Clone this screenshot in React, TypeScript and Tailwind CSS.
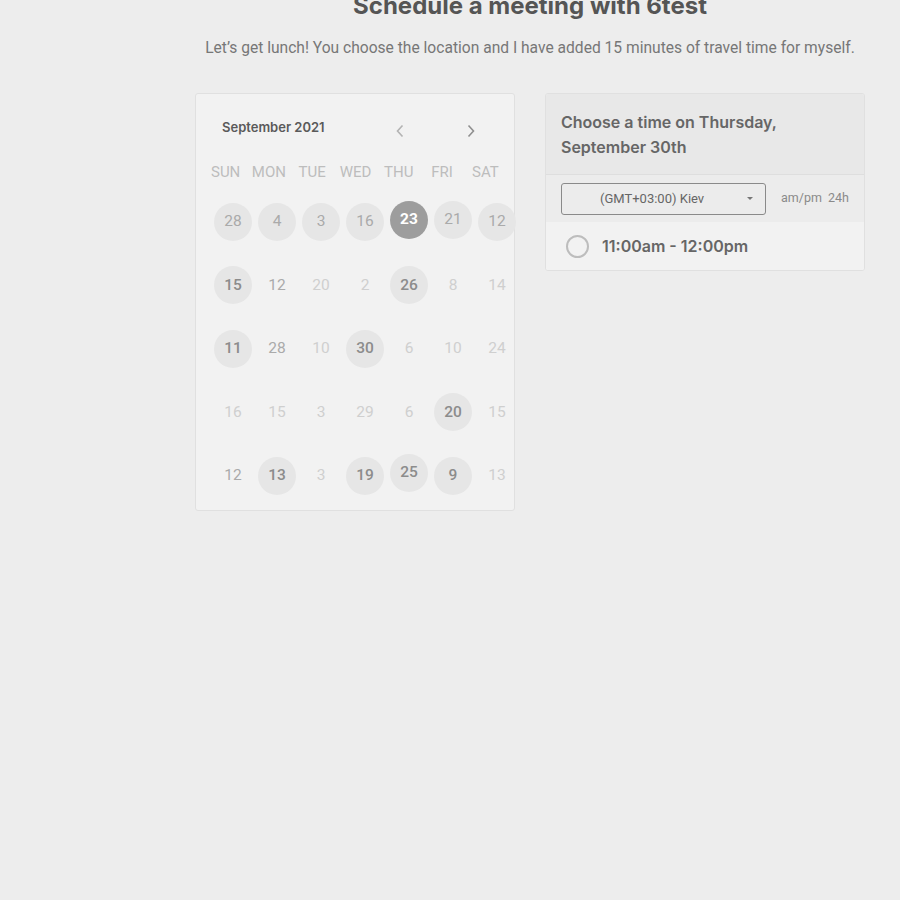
const days = ["SUN", "MON", "TUE", "WED", "THU", "FRI", "SAT"];

type Cell = { n: number; kind: "open" | "strong" | "plain" | "faint" | "selected"; dy?: number };

const weeks: Cell[][] = [
  [
    { n: 28, kind: "open" },
    { n: 4, kind: "open" },
    { n: 3, kind: "open" },
    { n: 16, kind: "open" },
    { n: 23, kind: "selected", dy: -2 },
    { n: 21, kind: "open", dy: -2 },
    { n: 12, kind: "open" },
  ],
  [
    { n: 15, kind: "strong" },
    { n: 12, kind: "plain" },
    { n: 20, kind: "faint" },
    { n: 2, kind: "faint" },
    { n: 26, kind: "strong" },
    { n: 8, kind: "faint" },
    { n: 14, kind: "faint" },
  ],
  [
    { n: 11, kind: "strong" },
    { n: 28, kind: "plain" },
    { n: 10, kind: "faint" },
    { n: 30, kind: "strong" },
    { n: 6, kind: "faint" },
    { n: 10, kind: "faint" },
    { n: 24, kind: "faint" },
  ],
  [
    { n: 16, kind: "faint" },
    { n: 15, kind: "faint" },
    { n: 3, kind: "faint" },
    { n: 29, kind: "faint" },
    { n: 6, kind: "faint" },
    { n: 20, kind: "strong" },
    { n: 15, kind: "faint" },
  ],
  [
    { n: 12, kind: "plain" },
    { n: 13, kind: "strong" },
    { n: 3, kind: "faint" },
    { n: 19, kind: "strong" },
    { n: 25, kind: "strong", dy: -3 },
    { n: 9, kind: "strong" },
    { n: 13, kind: "faint" },
  ],
];

const cellClass = {
  open: "bg-[#e6e6e6] text-[#aaaaaa]",
  strong: "bg-[#e6e6e6] text-[#8c8c8c] font-medium",
  plain: "text-[#aaaaaa]",
  faint: "text-[#cfcfcf]",
  selected: "bg-[#9d9d9d] text-white font-bold",
};

const Chevron = ({ dir }: { dir: "left" | "right" }) => (
  <svg width="10" height="16" viewBox="0 0 10 16" fill="none">
    <path
      d={dir === "left" ? "M7.5 2.5 L2.5 8 L7.5 13.5" : "M2.5 2.5 L7.5 8 L2.5 13.5"}
      stroke={dir === "left" ? "#b3b3b3" : "#8f8f8f"}
      strokeWidth="1.6"
    />
  </svg>
);

const App = () => {
  return (
    <div className="min-h-[900px] w-[900px] bg-[#ededed] overflow-hidden">
      <div className="ml-[195px] w-[670px]">
        <h1 className="mt-[-9px] text-center text-[24px] leading-[30px] font-bold text-[#555555] font-['Inter',sans-serif]">
          Schedule a meeting with 6test
        </h1>
        <p className="mt-[17px] text-center text-[15.6px] leading-[20px] text-[#777777] font-['Roboto',sans-serif]">
          Let’s get lunch! You choose the location and I have added 15 minutes of travel time for myself.
        </p>

        <div className="mt-[35px] flex items-start gap-[30px]">
          {/* calendar */}
          <div className="w-[320px] h-[418px] bg-[#f2f2f2] border border-[#e0e0e0] rounded-[3px] font-['Roboto',sans-serif]">
            <div className="flex items-center h-[66px] pt-[2px]">
              <span className="ml-[26px] text-[13px] font-semibold text-[#5a5a5a] font-['Inter',sans-serif]">
                September 2021
              </span>
              <span className="ml-[70px] mt-[6px]">
                <Chevron dir="left" />
              </span>
              <span className="ml-[61px] mt-[6px]">
                <Chevron dir="right" />
              </span>
            </div>
            <div className="ml-[8px] w-[303px] grid grid-cols-7 text-center text-[15px] leading-[24px] text-[#bdbdbd]">
              {days.map((d) => (
                <span key={d}>{d}</span>
              ))}
            </div>
            <div className="ml-[15px] mt-[6px] w-[308px] grid grid-cols-7 auto-rows-[63.5px]">
              {weeks.flat().map((c, i) => (
                <div key={i} className="flex items-center justify-center">
                  <span
                    style={c.dy ? { marginTop: c.dy * 2 } : undefined}
                    className={`w-[38px] h-[38px] rounded-full flex items-center justify-center text-[15.5px] ${cellClass[c.kind]}`}
                  >
                    {c.n}
                  </span>
                </div>
              ))}
            </div>
          </div>

          {/* time panel */}
          <div className="w-[320px] border border-[#e0e0e0] rounded-[3px] overflow-hidden bg-[#f2f2f2]">
            <div className="h-[81px] bg-[#e8e8e8] border-b border-[#dedede] px-[15px] pt-[16px]">
              <p className="text-[16px] leading-[25px] font-semibold text-[#666666] font-['Inter',sans-serif]">
                Choose a time on Thursday,
                <br />
                September 30th
              </p>
            </div>
            <div className="h-[47px] bg-[#ececec] flex items-center px-[15px] font-['Roboto',sans-serif]">
              <div className="w-[205px] h-[32px] border border-[#8a8a8a] rounded-[3px] flex items-center">
                <span className="ml-[38px] text-[13px] text-[#666666]">(GMT+03:00) Kiev</span>
                <svg className="ml-auto mr-[11px]" width="8" height="5" viewBox="0 0 8 5">
                  <path d="M1 1 L4 4 L7 1 Z" fill="#777777" />
                </svg>
              </div>
              <span className="ml-[15px] text-[12.5px] text-[#8a8a8a]">am/pm</span>
              <span className="ml-[6px] text-[12.5px] text-[#8a8a8a]">24h</span>
            </div>
            <div className="h-[48px] bg-[#f2f2f2] flex items-center px-[20px]">
              <span className="w-[23px] h-[23px] rounded-full border-2 border-[#bdbdbd]" />
              <span className="ml-[13px] text-[16px] font-semibold text-[#666666] font-['Inter',sans-serif]">
                11:00am - 12:00pm
              </span>
            </div>
          </div>
        </div>
      </div>
    </div>
  );
};

export default App;
